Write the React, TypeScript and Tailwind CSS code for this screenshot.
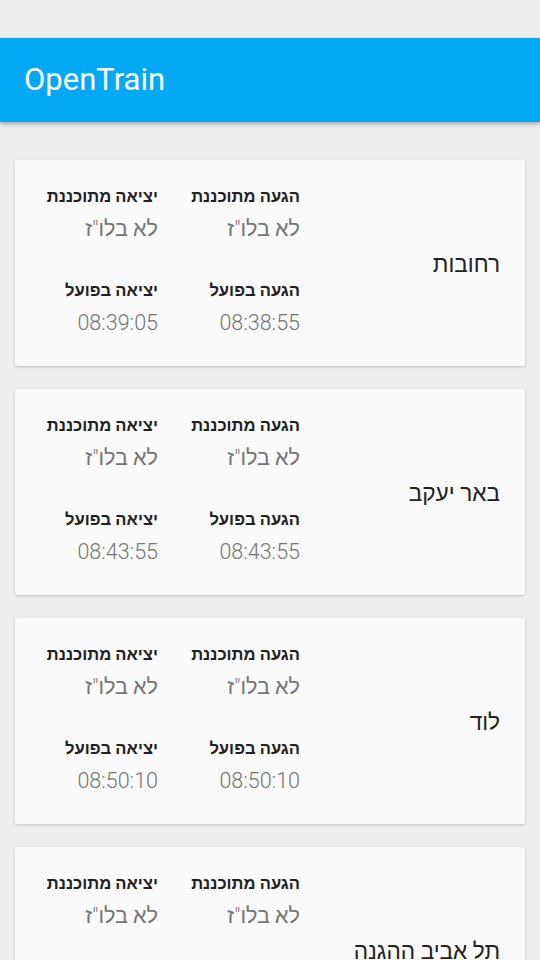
const stations = [
  { name: "רחובות", arrival: "08:38:55", departure: "08:39:05" },
  { name: "באר יעקב", arrival: "08:43:55", departure: "08:43:55" },
  { name: "לוד", arrival: "08:50:10", departure: "08:50:10" },
  { name: "תל אביב ההגנה", arrival: "08:58:40", departure: "08:59:10" },
]

function Cell({ label, value }: { label: string; value: string }) {
  return (
    <div className="flex flex-col items-start">
      <div className="text-[16.6px] leading-[20px] font-bold text-[#212121]">{label}</div>
      <div className="mt-[8px] text-[21.5px] leading-[28px] font-light text-[#757575]">{value}</div>
    </div>
  )
}

function StopCard({ name, arrival, departure }: { name: string; arrival: string; departure: string }) {
  return (
    <div
      dir="rtl"
      className="mx-[15px] flex items-center bg-[#fafafa] rounded-[2px] shadow-[0_1px_3px_rgba(0,0,0,0.2)] pt-[27px] pb-[29px]"
    >
      <div className="w-[225px] shrink-0 pr-[25px] mt-[6px] text-[22.6px] leading-[28px] text-[#212121]">{name}</div>
      <div className="grid grid-cols-[142px_142px] gap-y-[38px]">
        <Cell label="הגעה מתוכננת" value='לא בלו"ז' />
        <Cell label="יציאה מתוכננת" value='לא בלו"ז' />
        <Cell label="הגעה בפועל" value={arrival} />
        <Cell label="יציאה בפועל" value={departure} />
      </div>
    </div>
  )
}

export default function App() {
  return (
    <div
      className="min-h-[960px] bg-[#eeeeee]"
      style={{ fontFamily: 'Roboto, "Liberation Sans", sans-serif' }}
    >
      <div className="h-[38px]" />
      <div className="h-[84px] bg-[#03a9f4] flex items-center px-[24px] shadow-[0_2px_4px_rgba(0,0,0,0.3)] relative z-10">
        <span className="text-[31px] text-white">OpenTrain</span>
      </div>
      <div className="flex flex-col gap-[23px] pt-[38px] pb-[20px]">
        {stations.map((s) => (
          <StopCard key={s.name} {...s} />
        ))}
      </div>
    </div>
  )
}
